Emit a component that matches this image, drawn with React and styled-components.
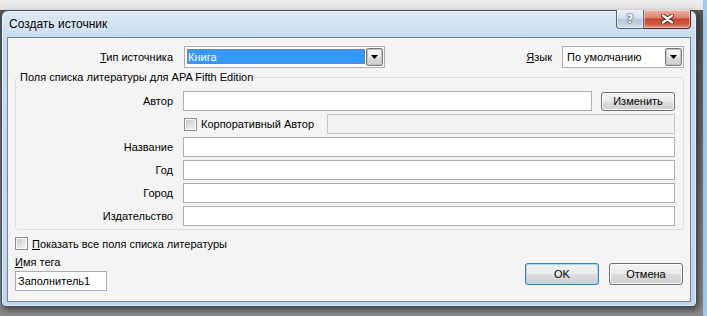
import React from "react";
import styled, { createGlobalStyle } from "styled-components";

const Global = createGlobalStyle`
  html, body { margin: 0; padding: 0; }
  body {
    width: 707px; height: 316px; overflow: hidden; background: #e6e6e6;
    font-family: "Liberation Sans", Arial, sans-serif; font-size: 11px; color: #000;
  }
`;

const Desktop = styled.div`
  width: 707px; height: 316px; box-sizing: border-box; overflow: hidden;
  padding: 10px 0 0 1px;
  background:
    linear-gradient(90deg, transparent 703px, #a9c6e4 703px),
    linear-gradient(180deg, #eeeeee 0, #e2e2e2 10px, #555555 10px, #8a8a8a 316px);
`;

const Window = styled.div`
  width: 696px; height: 297px; box-sizing: border-box;
  border: 1px solid #3f4c5b; border-radius: 7px 7px 5px 5px;
  background: linear-gradient(180deg, #dce9f6 0, #c8dcf0 26px, #bed5ec 100%);
  box-shadow: inset 0 0 0 1px rgba(255,255,255,0.55), 2px 3px 6px rgba(0,0,0,0.5);
  display: flex; flex-direction: column;
`;

const TitleBar = styled.div`
  height: 26px; flex: none; display: flex; align-items: flex-start;
`;

const Title = styled.div`
  padding-left: 7px; line-height: 26px; font-size: 12px; color: #000;
  text-shadow: 0 0 6px rgba(255,255,255,0.9);
`;

const CaptionButtons = styled.div`
  margin: -1px 5px 0 auto; display: flex;
`;

const CaptionButton = styled.div`
  height: 19px; box-sizing: border-box; display: flex; align-items: center; justify-content: center;
  width: ${p => p.$w}px;
  border: 1px solid ${p => (p.$close ? "#5a2119" : "#52627a")};
  border-top: none;
  ${p => (p.$close ? "border-left: none;" : "")}
  border-radius: ${p => (p.$close ? "0 0 4px 0" : "0 0 0 4px")};
  background: ${p =>
    p.$close
      ? "linear-gradient(180deg, #eab1a5 0%, #dc8a78 40%, #c8452f 52%, #cf5a42 78%, #e7967f 100%)"
      : "linear-gradient(180deg, #e9eff6 0%, #d6e0eb 45%, #b9c8d9 52%, #c3d1e0 80%, #d8e5f2 100%)"};
  box-shadow: inset 0 0 0 1px rgba(255,255,255,0.45);
`;

const HelpGlyph = styled.span`
  font-family: "DejaVu Sans", sans-serif; font-weight: bold; font-size: 12px; line-height: 12px;
  color: #fff;
  text-shadow: 0 0 1px #3e4f66, 0 0 1px #3e4f66, 0 0 2px #3e4f66;
`;

const Client = styled.div`
  flex: 1; margin: 0 5px 4px 5px; border: 1px solid #72869b; background: #f4f4f4;
  display: flex; flex-direction: column;
`;

const TopRow = styled.div`
  display: flex; align-items: center; margin-top: 8px; padding-right: 6px; height: 22px;
`;

const TopLabel = styled.div`
  width: ${p => (p.$w ? `${p.$w}px` : "auto")}; text-align: right; white-space: nowrap;
  margin-left: ${p => (p.$auto ? "auto" : "0")}; margin-right: ${p => p.$gap}px;
`;

const Mn = styled.span`text-decoration: underline; text-underline-offset: 1px;`;

const Combo = styled.div`
  width: ${p => p.$w}px; height: 22px; box-sizing: border-box; border: 1px solid #abadb3;
  background: #fff; display: flex; align-items: stretch; padding: 1px;
`;

const ComboValue = styled.div`
  flex: 1; display: flex; align-items: center; padding-left: 3px; white-space: nowrap;
`;

const ComboSelected = styled.div`
  flex: 1; margin: 1px 1px 2px 1px; display: flex; align-items: center; padding-left: 1px;
  background: #3399ff; color: #fff; outline: 1px dotted #b5712b; outline-offset: -1px;
`;

const DropButton = styled.div`
  width: 17px; box-sizing: border-box; border: 1px solid #7c7c7c; border-radius: 2px;
  background: linear-gradient(180deg, #fafafa 0%, #eeeeee 45%, #dcdcdc 55%, #cfcfcf 100%);
  box-shadow: inset 0 0 0 1px #c2c2c2;
  display: flex; align-items: center; justify-content: center;
`;

const Arrow = () => (
  <svg width="7" height="4" viewBox="0 0 7 4"><path d="M0 0h7L3.5 4z" fill="#000" /></svg>
);

const GroupBox = styled.div`
  margin: 9px 6px 0 7px; border: 1px solid #d5dfe5; border-radius: 3px;
  display: flex; flex-direction: column;
`;

const Legend = styled.div`
  align-self: flex-start; margin: -7px 0 0 3px; padding: 0 1px; line-height: 13px;
  background: #f4f4f4; white-space: nowrap;
`;

const FieldGrid = styled.div`
  display: grid; grid-template-columns: 157px 1fr; column-gap: 10px; row-gap: 3px;
  padding: 7px 8px 3px 0;
`;

const FieldLabel = styled.div`
  text-align: right; line-height: 20px; white-space: nowrap;
`;

const ControlRow = styled.div`
  display: flex; align-items: center; height: 20px;
`;

const TextBox = styled.div`
  box-sizing: border-box; height: 20px; border: 1px solid #abadb3;
  background: ${p => (p.$disabled ? "#f2f2f2" : "#fff")};
  ${p => (p.$disabled ? "border-color: #c3c4c8;" : "")}
  width: ${p => (p.$w ? `${p.$w}px` : "auto")};
  flex: ${p => (p.$w ? "none" : "1")};
  margin-left: ${p => (p.$auto ? "auto" : "0")};
  display: flex; align-items: center; padding-left: 2px; white-space: nowrap;
`;

const Button = styled.div`
  box-sizing: border-box; width: 74px; height: ${p => p.$h || 22}px; flex: none;
  margin-left: ${p => p.$ml || 0}px;
  border: 1px solid ${p => (p.$default ? "#3c7fb1" : "#707070")}; border-radius: 3px;
  background: linear-gradient(180deg, #f2f2f2 0%, #ebebeb 50%, #dddddd 51%, #cfcfcf 100%);
  box-shadow: inset 0 0 0 1px ${p => (p.$default ? "#9fdcf7" : "#fcfcfc")};
  display: flex; align-items: center; justify-content: center;
`;

const CheckBox = styled.span`
  width: 13px; height: 13px; box-sizing: border-box; flex: none; display: inline-flex;
  border: 1px solid #8e8f8f; background: #fafafa; padding: 1px; margin-left: ${p => p.$ml || 0}px;
  &::after {
    content: ""; flex: 1;
    background: linear-gradient(135deg, #c4c7cc 0%, #dcdee1 45%, #f3f3f4 100%);
  }
`;

const CheckText = styled.span`margin-left: 4px; white-space: nowrap;`;

const CheckRow = styled.div`
  display: flex; align-items: center; height: 13px; margin-top: 7px; padding-left: 7px;
`;

const Footer = styled.div`
  display: flex; align-items: flex-start; margin-top: 6px; padding: 0 7px;
`;

const TagColumn = styled.div`display: flex; flex-direction: column; gap: 2px;`;
const TagLabel = styled.div`line-height: 13px;`;

const FooterButtons = styled.div`
  margin: 7px 0 0 auto; display: flex; gap: 10px;
`;

export default function App() {
  return (
    <Desktop>
      <Global />
      <Window>
        <TitleBar>
          <Title>Создать источник</Title>
          <CaptionButtons>
            <CaptionButton $w={28}><HelpGlyph>?</HelpGlyph></CaptionButton>
            <CaptionButton $w={47} $close>
              <svg width="13" height="10" viewBox="0 0 13 10">
                <path d="M2 1.5L11 8.5M11 1.5L2 8.5" stroke="#5a2119" strokeWidth="4.2" strokeLinecap="round" />
                <path d="M2 1.5L11 8.5M11 1.5L2 8.5" stroke="#fff" strokeWidth="2.4" strokeLinecap="round" />
              </svg>
            </CaptionButton>
          </CaptionButtons>
        </TitleBar>
        <Client>
          <TopRow>
            <TopLabel $w={165} $gap={11}><Mn>Т</Mn>ип источника</TopLabel>
            <Combo $w={201}>
              <ComboSelected>Книга</ComboSelected>
              <DropButton><Arrow /></DropButton>
            </Combo>
            <TopLabel $auto $gap={10}><Mn>Я</Mn>зык</TopLabel>
            <Combo $w={122}>
              <ComboValue>По умолчанию</ComboValue>
              <DropButton><Arrow /></DropButton>
            </Combo>
          </TopRow>
          <GroupBox>
            <Legend>Поля списка литературы для APA Fifth Edition</Legend>
            <FieldGrid>
              <FieldLabel>Автор</FieldLabel>
              <ControlRow>
                <TextBox />
                <Button $h={19} $ml={9}>Изменить</Button>
              </ControlRow>
              <FieldLabel />
              <ControlRow>
                <CheckBox $ml={1} />
                <CheckText>Корпоративный Автор</CheckText>
                <TextBox $disabled $auto $w={348} />
              </ControlRow>
              <FieldLabel>Название</FieldLabel>
              <TextBox />
              <FieldLabel>Год</FieldLabel>
              <TextBox />
              <FieldLabel>Город</FieldLabel>
              <TextBox />
              <FieldLabel>Издательство</FieldLabel>
              <TextBox />
            </FieldGrid>
          </GroupBox>
          <CheckRow>
            <CheckBox />
            <CheckText><Mn>П</Mn>оказать все поля списка литературы</CheckText>
          </CheckRow>
          <Footer>
            <TagColumn>
              <TagLabel><Mn>И</Mn>мя тега</TagLabel>
              <TextBox $w={92}>Заполнитель1</TextBox>
            </TagColumn>
            <FooterButtons>
              <Button $default>OK</Button>
              <Button>Отмена</Button>
            </FooterButtons>
          </Footer>
        </Client>
      </Window>
    </Desktop>
  );
}
